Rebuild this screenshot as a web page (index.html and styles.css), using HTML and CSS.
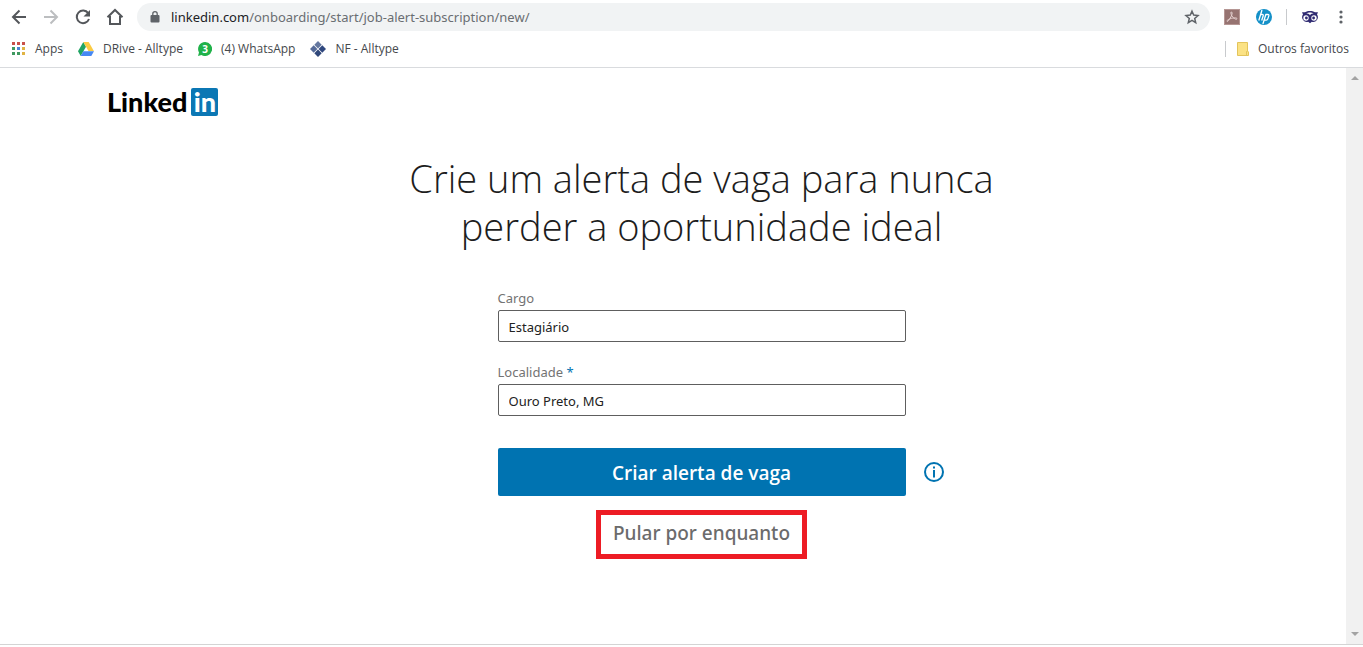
FILE: index.html
```html
<!DOCTYPE html>
<html lang="pt-BR">
    <head>
        <meta charset="utf-8">
        <title>LinkedIn</title>
        <link rel="stylesheet" href="styles.css">
    </head>
    <body>
        <header class="browser">
            <div class="toolbar">
                <button class="nav-button" aria-label="Voltar">
                    <svg width="16" height="16" viewBox="0 0 16 16" fill="none" stroke="currentColor" stroke-width="2"><path d="M15 8H2M8.500 1.500L2 8l6.500 6.500"/></svg>
                </button>
                <button class="nav-button disabled" aria-label="Avançar">
                    <svg width="16" height="16" viewBox="0 0 16 16" fill="none" stroke="currentColor" stroke-width="2"><path d="M1 8h13M7.500 1.500L14 8l-6.500 6.500"/></svg>
                </button>
                <button class="nav-button" aria-label="Recarregar">
                    <svg width="16" height="16" viewBox="0 0 16 16"><path d="M13.200 4.200A6.300 6.300 0 1 0 14 10" fill="none" stroke="currentColor" stroke-width="2"/><path d="M15 1v6.500H8.500z" fill="currentColor"/></svg>
                </button>
                <button class="nav-button" aria-label="Página inicial">
                    <svg width="18" height="18" viewBox="0 0 18 18" fill="none" stroke="currentColor" stroke-width="2"><path d="M1.500 9.300L9 2l7.500 7.300M4 8v8h10V8"/></svg>
                </button>
                <div class="address">
                    <svg width="10" height="14" viewBox="0 0 10 14"><rect x=".5" y="5" width="9" height="7.500" rx="1" fill="#5f6368"/><path d="M2.800 5.500V3.800a2.200 2.200 0 0 1 4.400 0v1.700" fill="none" stroke="#5f6368" stroke-width="1.300"/></svg>
                    <span class="url"><span class="domain">linkedin.com</span>/onboarding/start/job-alert-subscription/new/</span>
                    <svg width="16" height="16" viewBox="0 0 16 16" fill="none" stroke="#5f6368" stroke-width="1.500"><path d="M8 2.200l1.700 3.900 4.300.4-3.300 2.900 1 4.200L8 11.400l-3.700 2.200 1-4.200L2 6.500l4.300-.4z"/></svg>
                </div>
                <div class="extensions">
                    <svg width="16" height="16" viewBox="0 0 16 16"><rect width="16" height="16" fill="#b59694"/><rect x="1" y="1" width="14" height="14" fill="#967371"/><path d="M7.300 3c1.500 0 .8 3-1 6-1.300 2.300-2.800 4-3.300 3.300-.5-1 2.500-2.600 5.500-3.200 2.600-.5 4.800-.2 4.500.8-.4 1-2.800-.2-4.200-1.700C7.200 6.400 6.300 3 7.300 3z" fill="none" stroke="#e6d2d1"/></svg>
                    <svg width="16" height="16" viewBox="0 0 16 16"><circle cx="8" cy="8" r="8" fill="#1490c8"/><path d="M6 1L2.800 11.500M4.500 5.500h1.700c1 0 1.200.6 1 1.300l-1.500 4.700M10 5L6.900 15M9.900 5.500h1.900c1 0 1.200.7 1 1.400l-1 3c-.3.9-.7 1.200-1.500 1.200H8.500" fill="none" stroke="#fff" stroke-width="1.300"/></svg>
                    <span class="divider"></span>
                    <svg width="18" height="14" viewBox="0 0 18 14"><path d="M1 2.200h3C5.500 1.300 7 1 9 1s3.500.3 5 1.200h3l-1 2.400a4.700 4.700 0 0 1-5.200 7.200L9 13.300l-1.800-1.500A4.700 4.700 0 0 1 2 4.600z" fill="#302b72"/><path d="M5.300 3.300C6.800 3.400 8 4 9 5.200c1-1.200 2.200-1.800 3.700-1.900C11.500 2.600 10.400 2.400 9 2.400s-2.500.2-3.700.9z" fill="#fff"/><circle cx="5" cy="8" r="2.700" fill="#fff"/><circle cx="13" cy="8" r="2.700" fill="#fff"/><circle cx="5.400" cy="8" r="1.400" fill="#302b72"/><circle cx="12.600" cy="8" r="1.400" fill="#302b72"/></svg>
                    <button class="menu" aria-label="Menu">
                        <svg width="4" height="14" viewBox="0 0 4 14" fill="#5f6368"><circle cx="2" cy="2" r="1.600"/><circle cx="2" cy="7" r="1.600"/><circle cx="2" cy="12" r="1.600"/></svg>
                    </button>
                </div>
            </div>
            <nav class="bookmarks">
                <a href="#">
                    <svg width="14" height="14" viewBox="0 0 14 14"><path d="M0 0h3v3H0zM5 0h3v3H5zM10 0h3v3h-3z" fill="#c9504a"/><path d="M0 5h3v3H0zM0 10h3v3H0zM5 10h3v3H5z" fill="#3f9960"/><path d="M5 5h3v3H5z" fill="#4a83d4"/><path d="M10 5h3v3h-3zM10 10h3v3h-3z" fill="#e0b344"/></svg>
                    Apps
                </a>
                <a href="#">
                    <svg width="16" height="14" viewBox="0 0 16 14"><path d="M5.300 0L0 9.300 2.700 14 8 4.700z" fill="#1fa463"/><path d="M5.300 0h5.400L16 9.300h-5.400z" fill="#fbcb43"/><path d="M5.400 9.300H16L13.300 14H2.700z" fill="#4688f4"/></svg>
                    DRive - Alltype
                </a>
                <a href="#">
                    <svg width="14" height="14" viewBox="0 0 14 14"><path d="M7 0a7 7 0 1 1-3.500 13L0 14l1-3.500A7 7 0 0 1 7 0z" fill="#20b24a"/><text x="7" y="11" text-anchor="middle" class="badge-text">3</text></svg>
                    (4) WhatsApp
                </a>
                <a href="#">
                    <svg width="16" height="16" viewBox="0 0 16 16"><path d="M8 0l3.700 3.700L8 7.400 4.300 3.700z" fill="#64779f"/><path d="M3.700 4.300L7.400 8l-3.700 3.700L0 8z" fill="#556a98"/><path d="M12.300 4.300L16 8l-3.700 3.700L8.600 8z" fill="#2f477e"/><path d="M8 8.600l3.700 3.700L8 16l-3.700-3.700z" fill="#304779"/></svg>
                    NF - Alltype
                </a>
                <span class="divider"></span>
                <a href="#">
                    <svg width="12" height="14" viewBox="0 0 12 14"><path d="M.5.500h10V9l1 1v3.500H.5z" fill="#fbe284" stroke="#e3c45b"/><path d="M9.500 13V9.500h1" fill="none" stroke="#e3c45b"/></svg>
                    Outros favoritos
                </a>
            </nav>
        </header>

        <div class="viewport">
            <div class="page">
                <a class="logo" href="#" aria-label="LinkedIn">Linked<span class="logo-in">in</span></a>
                <main>
                    <h1>Crie um alerta de vaga para nunca<br>perder a oportunidade ideal</h1>
                    <form class="alert-form">
                        <label for="cargo">Cargo</label>
                        <input type="text" id="cargo" value="Estagiário">
                        <label for="localidade">Localidade <span class="required">*</span></label>
                        <input type="text" id="localidade" value="Ouro Preto, MG">
                        <div class="submit-row">
                            <button type="submit" class="primary">Criar alerta de vaga</button>
                            <button type="button" class="info" aria-label="Informações">
                                <svg width="20" height="20" viewBox="0 0 20 20"><circle cx="10" cy="10" r="9" fill="none" stroke="#0073b1" stroke-width="2"/><path d="M9 4.500h2v2H9zM9 8h2v7.500H9z" fill="#0073b1"/></svg>
                            </button>
                        </div>
                        <button type="button" class="skip">Pular por enquanto</button>
                    </form>
                </main>
            </div>
            <div class="scrollbar">
                <svg width="8" height="4" viewBox="0 0 8 4"><path d="M4 0l4 4H0z" fill="#a3a3a3"/></svg>
                <svg width="8" height="4" viewBox="0 0 8 4"><path d="M0 0h8L4 4z" fill="#a3a3a3"/></svg>
            </div>
        </div>
    </body>
</html>
```
FILE: styles.css
```css
* {
    box-sizing: border-box;
}
body {
    margin: 0;
    min-height: 100vh;
    padding-bottom: 2px;
    display: flex;
    flex-direction: column;
    font-family: "Noto Sans", "Open Sans", sans-serif;
    background-color: #fff;
}
svg {
    display: block;
    flex: none;
}
button {
    border: none;
    padding: 0;
    background: none;
    font-family: inherit;
    cursor: pointer;
}
a {
    color: inherit;
    text-decoration: none;
}

/* Browser bars */
.browser {
    border-bottom: 1px solid #d9dbde;
}
.toolbar {
    display: flex;
    align-items: center;
    height: 34px;
    padding: 0 20px 0 3px;
}
.nav-button {
    width: 32px;
    height: 28px;
    display: flex;
    align-items: center;
    justify-content: center;
    color: #54575b;
}
.disabled {
    color: #bcbec0;
}
.address {
    flex: 1;
    display: flex;
    align-items: center;
    height: 28px;
    margin-left: 6px;
    padding: 0 10px 0 13px;
    border-radius: 14px;
    background-color: #f1f3f4;
}
.url {
    flex: 1;
    margin-left: 11px;
    font-size: 13px;
    color: #6a6e72;
}
.domain {
    color: #202124;
}
.extensions {
    display: flex;
    align-items: center;
    gap: 16px;
    padding-left: 14px;
}
.extensions .divider {
    margin: 0 -2px;
}
.divider {
    width: 1px;
    height: 16px;
    background-color: #c8cacd;
}
.menu {
    width: 8px;
    height: 20px;
    display: flex;
    align-items: center;
    justify-content: flex-end;
}
.bookmarks {
    display: flex;
    align-items: center;
    gap: 15px;
    height: 33px;
    padding: 0 14px 4px 12px;
    font-family: "Open Sans", "Noto Sans", sans-serif;
    font-size: 12px;
    color: #45484c;
}
.bookmarks a {
    display: flex;
    align-items: center;
    gap: 9px;
}
.bookmarks .divider {
    margin-left: auto;
    margin-right: -4px;
}
.badge-text {
    font-size: 10px;
    font-weight: bold;
    fill: #fff;
}

/* Page */
.viewport {
    flex: 1;
    display: flex;
    border-bottom: 1px solid #d4d4d4;
}
.page {
    flex: 1;
    padding: 20px 0 40px;
}
.logo {
    display: flex;
    align-items: center;
    gap: 4px;
    width: max-content;
    height: 28px;
    margin-left: 107px;
    font-family: Lato, sans-serif;
    font-size: 27px;
    font-weight: 900;
    line-height: 28px;
    color: #000;
}
.logo-in {
    width: 27px;
    height: 28px;
    border-radius: 2px;
    background-color: #0b77b4;
    color: #fff;
    text-align: center;
}
main {
    display: flex;
    flex-direction: column;
    align-items: center;
    padding-left: 57px;
}
h1 {
    margin: 38px 0;
    font-family: "Open Sans", "Noto Sans", sans-serif;
    font-size: 38px;
    font-weight: 300;
    line-height: 48px;
    text-align: center;
    color: #1d1d1d;
}
.alert-form {
    width: 408px;
    display: flex;
    flex-direction: column;
}
.alert-form label {
    padding-bottom: 2px;
    font-size: 13px;
    line-height: 20px;
    color: #737373;
}
.required {
    color: #0073b1;
}
.alert-form input {
    height: 32px;
    margin-bottom: 20px;
    padding: 2px 10px 0;
    border: 1px solid #5e5e5e;
    border-radius: 2px;
    font-family: inherit;
    font-size: 13px;
    color: #222;
}
.submit-row {
    display: flex;
    align-items: center;
    gap: 18px;
    margin-top: 12px;
}
.primary {
    flex: none;
    width: 100%;
    height: 48px;
    padding-top: 2px;
    border-radius: 2px;
    background-color: #0073b1;
    color: #fff;
    font-family: "Open Sans", "Noto Sans", sans-serif;
    font-size: 19px;
    font-weight: 600;
}
.skip {
    align-self: center;
    height: 49px;
    margin-top: 14px;
    padding: 0 12px 4px;
    border: 5px solid #ed1c24;
    color: #6b6b6b;
    font-size: 19px;
    font-weight: 500;
}
.scrollbar {
    width: 17px;
    padding: 8px 0;
    display: flex;
    flex-direction: column;
    align-items: center;
    justify-content: space-between;
    background-color: #f1f1f1;
}
```
